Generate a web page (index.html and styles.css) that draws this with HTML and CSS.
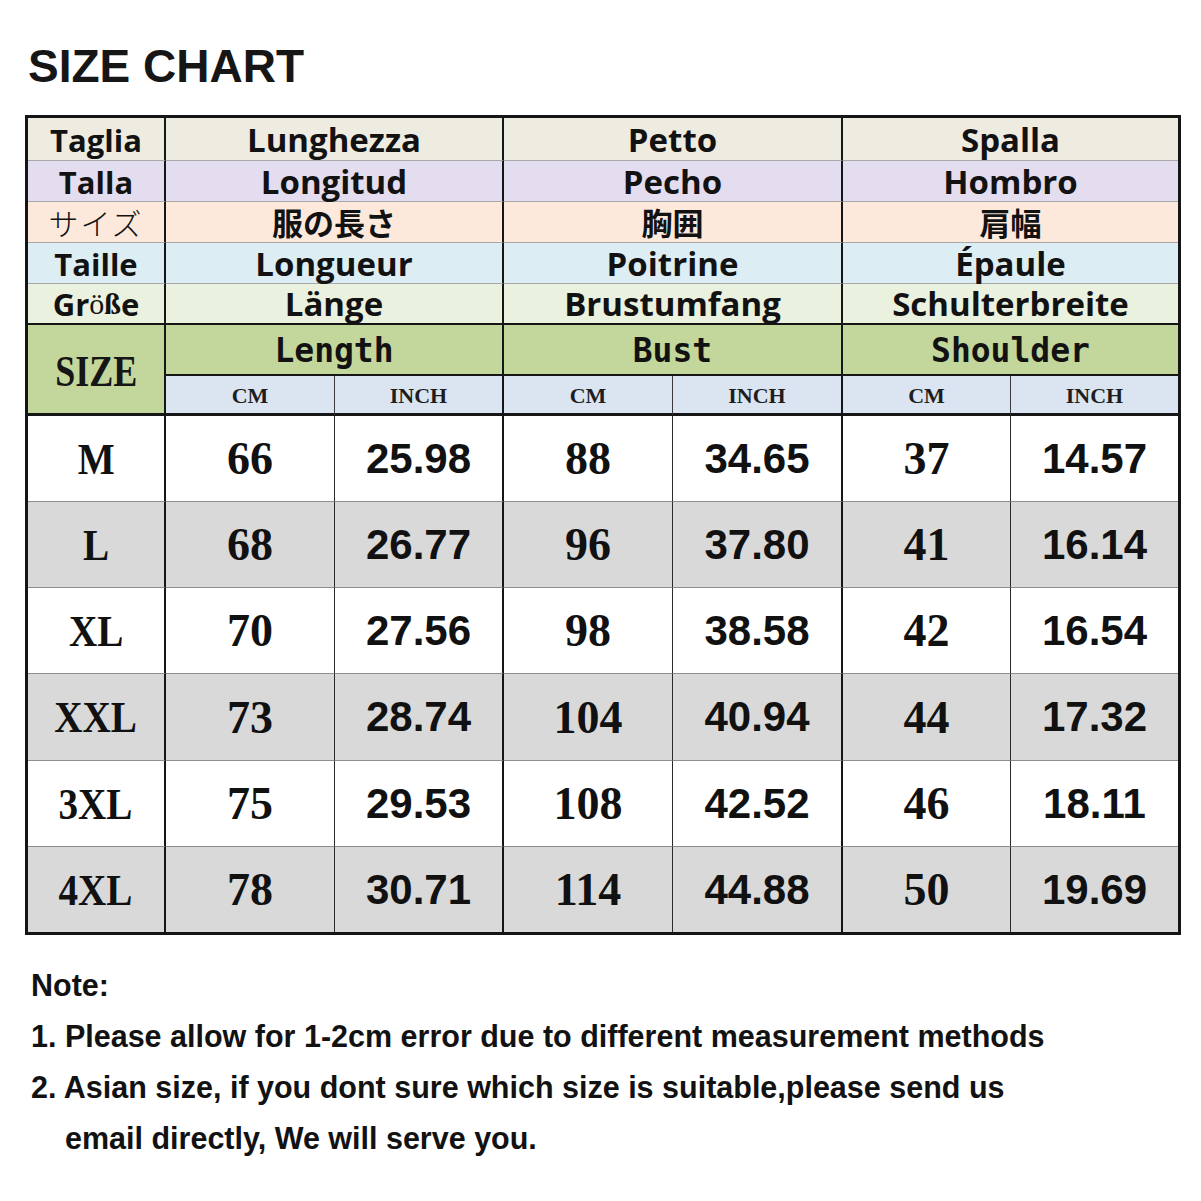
FILE: index.html
```html
<!DOCTYPE html>
<html lang="en">
<head>
<meta charset="utf-8">
<title>Size Chart</title>
<link rel="stylesheet" href="styles.css">
</head>
<body>
<div class="page">
  <h1 class="title">SIZE CHART</h1>

  <div class="chart">
    <div class="row lang it">
      <div class="c lbl">Taglia</div>
      <div class="c span">Lunghezza</div>
      <div class="c span">Petto</div>
      <div class="c span">Spalla</div>
    </div>
    <div class="row lang es">
      <div class="c lbl">Talla</div>
      <div class="c span">Longitud</div>
      <div class="c span">Pecho</div>
      <div class="c span">Hombro</div>
    </div>
    <div class="row lang jp">
      <div class="c lbl jp-lbl">サイズ</div>
      <div class="c span jp-txt">服の長さ</div>
      <div class="c span jp-txt">胸囲</div>
      <div class="c span jp-txt">肩幅</div>
    </div>
    <div class="row lang fr">
      <div class="c lbl">Taille</div>
      <div class="c span">Longueur</div>
      <div class="c span">Poitrine</div>
      <div class="c span">Épaule</div>
    </div>
    <div class="row lang de last">
      <div class="c lbl">Gr<span class="ser">ö</span><span class="ser b">ß</span>e</div>
      <div class="c span">Länge</div>
      <div class="c span">Brustumfang</div>
      <div class="c span">Schulterbreite</div>
    </div>

    <div class="row eng">
      <div class="c size-h"><span class="sq">SIZE</span></div>
      <div class="c span eh">Length</div>
      <div class="c span eh">Bust</div>
      <div class="c span eh">Shoulder</div>
    </div>
    <div class="row units">
      <div class="c cm">CM</div><div class="c inch">INCH</div>
      <div class="c cm">CM</div><div class="c inch">INCH</div>
      <div class="c cm">CM</div><div class="c inch">INCH</div>
    </div>

    <div class="row data">
      <div class="c sz"><span class="sq2">M</span></div>
      <div class="c cm">66</div><div class="c inch">25.98</div>
      <div class="c cm">88</div><div class="c inch">34.65</div>
      <div class="c cm">37</div><div class="c inch">14.57</div>
    </div>
    <div class="row data alt">
      <div class="c sz"><span class="sq2">L</span></div>
      <div class="c cm">68</div><div class="c inch">26.77</div>
      <div class="c cm">96</div><div class="c inch">37.80</div>
      <div class="c cm">41</div><div class="c inch">16.14</div>
    </div>
    <div class="row data">
      <div class="c sz"><span class="sq2">XL</span></div>
      <div class="c cm">70</div><div class="c inch">27.56</div>
      <div class="c cm">98</div><div class="c inch">38.58</div>
      <div class="c cm">42</div><div class="c inch">16.54</div>
    </div>
    <div class="row data alt">
      <div class="c sz"><span class="sq2">XXL</span></div>
      <div class="c cm">73</div><div class="c inch">28.74</div>
      <div class="c cm">104</div><div class="c inch">40.94</div>
      <div class="c cm">44</div><div class="c inch">17.32</div>
    </div>
    <div class="row data">
      <div class="c sz"><span class="sq2">3XL</span></div>
      <div class="c cm">75</div><div class="c inch">29.53</div>
      <div class="c cm">108</div><div class="c inch">42.52</div>
      <div class="c cm">46</div><div class="c inch">18.11</div>
    </div>
    <div class="row data alt lastrow">
      <div class="c sz"><span class="sq2">4XL</span></div>
      <div class="c cm">78</div><div class="c inch">30.71</div>
      <div class="c cm">114</div><div class="c inch">44.88</div>
      <div class="c cm">50</div><div class="c inch">19.69</div>
    </div>
  </div>

  <div class="note">
    <div class="note-head">Note:</div>
    <div class="item">1. Please allow for 1-2cm error due to different measurement methods</div>
    <div class="item">2. Asian size, if you dont sure which size is suitable,please send us email directly, We will serve you.</div>
  </div>
</div>
</body>
</html>
```

FILE: styles.css
```css
html, body {
  margin: 0;
  padding: 0;
  background: #ffffff;
}

body {
  font-family: "Liberation Sans", Arial, sans-serif;
  color: #111111;
}

.page {
  padding: 43px 0 0 25px;
}

.title {
  margin: 0 0 26px 3px;
  font-family: "Liberation Sans", Arial, sans-serif;
  font-weight: 700;
  font-size: 46px;
  line-height: 46px;
  color: #161616;
}

.chart {
  display: grid;
  width: 1150px;
  grid-template-columns: 138px 169px 169px 169px 170px 168px 167px;
  grid-template-rows: 43px 41px 41px 41px 41px 51px 40px 86px 86px 86px 87px 86px 85px;
  border-top: 3px solid #151515;
  border-left: 3px solid #151515;
  border-right: 3px solid #151515;
  border-bottom: 3px solid #151515;
}

.row {
  display: contents;
}

.c {
  box-sizing: border-box;
  display: flex;
  align-items: center;
  justify-content: center;
  white-space: nowrap;
}

.span {
  grid-column: span 2;
}

/* language header rows */
.lang .c {
  font-family: "Open Sans", "Noto Sans", sans-serif;
  font-weight: 700;
  font-size: 33px;
  line-height: 32px;
  color: #121212;
  border-bottom: 1px solid #a8a8a8;
  padding-top: 1px;
}

.lang .lbl {
  font-size: 31px;
}

.lang .c:not(:last-child) {
  border-right: 2px solid #161616;
}

.lang.last .c {
  border-bottom: 2px solid #161616;
}

.it .c { background: #eeebe1; }
.es .c { background: #e3ddef; }
.jp .c { background: #fde9dc; }
.fr .c { background: #ddedf4; }
.de .c { background: #ebf1df; }

.lang .jp-lbl {
  font-family: "Noto Sans CJK JP", sans-serif;
  font-weight: 300;
  font-size: 30px;
  line-height: 30px;
  letter-spacing: 2px;
  padding-top: 0;
}

.lang .jp-txt {
  font-family: "Noto Sans CJK JP", sans-serif;
  font-weight: 700;
  font-size: 31px;
  line-height: 30px;
  padding-top: 0;
}

.ser {
  font-family: "Liberation Serif", "Times New Roman", serif;
  font-weight: 400;
  font-size: 30px;
}

.ser.b {
  font-weight: 700;
}

/* english header */
.eng .c {
  background: #c3d69b;
  border-right: 2px solid #161616;
}

.eng .c:last-child {
  border-right: none;
}

.eng .eh {
  font-family: "DejaVu Sans Mono", "Liberation Mono", monospace;
  font-weight: 700;
  font-size: 33px;
  color: #121212;
  border-bottom: 2px solid #161616;
  padding-top: 2px;
}

.size-h {
  grid-row: span 2;
  border-bottom: 3px solid #161616;
  font-family: "Liberation Serif", "Times New Roman", serif;
  font-weight: 700;
  font-size: 45px;
  color: #161616;
  padding-top: 4px;
}

.sq {
  display: inline-block;
  transform: scaleX(0.8);
}

/* units row */
.units .c {
  background: #dbe4f1;
  border-bottom: 3px solid #161616;
  font-family: "Liberation Serif", "Times New Roman", serif;
  font-weight: 700;
  font-size: 22px;
  color: #1e1e1e;
  padding-top: 3px;
}

.units .cm {
  border-right: 1px solid #3a3a3a;
}

.units .inch {
  border-right: 2px solid #161616;
}

.units .inch:last-child {
  border-right: none;
}

/* data rows */
.data .c {
  background: #ffffff;
  border-bottom: 1px solid #8e8e8e;
  color: #111111;
}

.data.alt .c {
  background: #d9d9d9;
}

.data.lastrow .c {
  border-bottom: none;
}

.data .sz {
  border-right: 2px solid #161616;
  font-family: "Liberation Serif", "Times New Roman", serif;
  font-weight: 700;
  font-size: 45px;
}

.sq2 {
  display: inline-block;
  transform: scaleX(0.87);
}

.data .cm {
  border-right: 1px solid #2a2a2a;
  font-family: "Liberation Serif", "Times New Roman", serif;
  font-weight: 700;
  font-size: 46px;
}

.data .inch {
  border-right: 2px solid #161616;
  font-family: "Liberation Sans", Arial, sans-serif;
  font-weight: 700;
  font-size: 42px;
}

.data .inch:last-child {
  border-right: none;
}

/* note */
.note {
  margin: 25px 0 0 6px;
  width: 1045px;
  font-family: "Liberation Sans", Arial, sans-serif;
  font-weight: 700;
  font-size: 30.5px;
  line-height: 51px;
  color: #121212;
}

.item {
  padding-left: 34px;
  text-indent: -34px;
}
```
